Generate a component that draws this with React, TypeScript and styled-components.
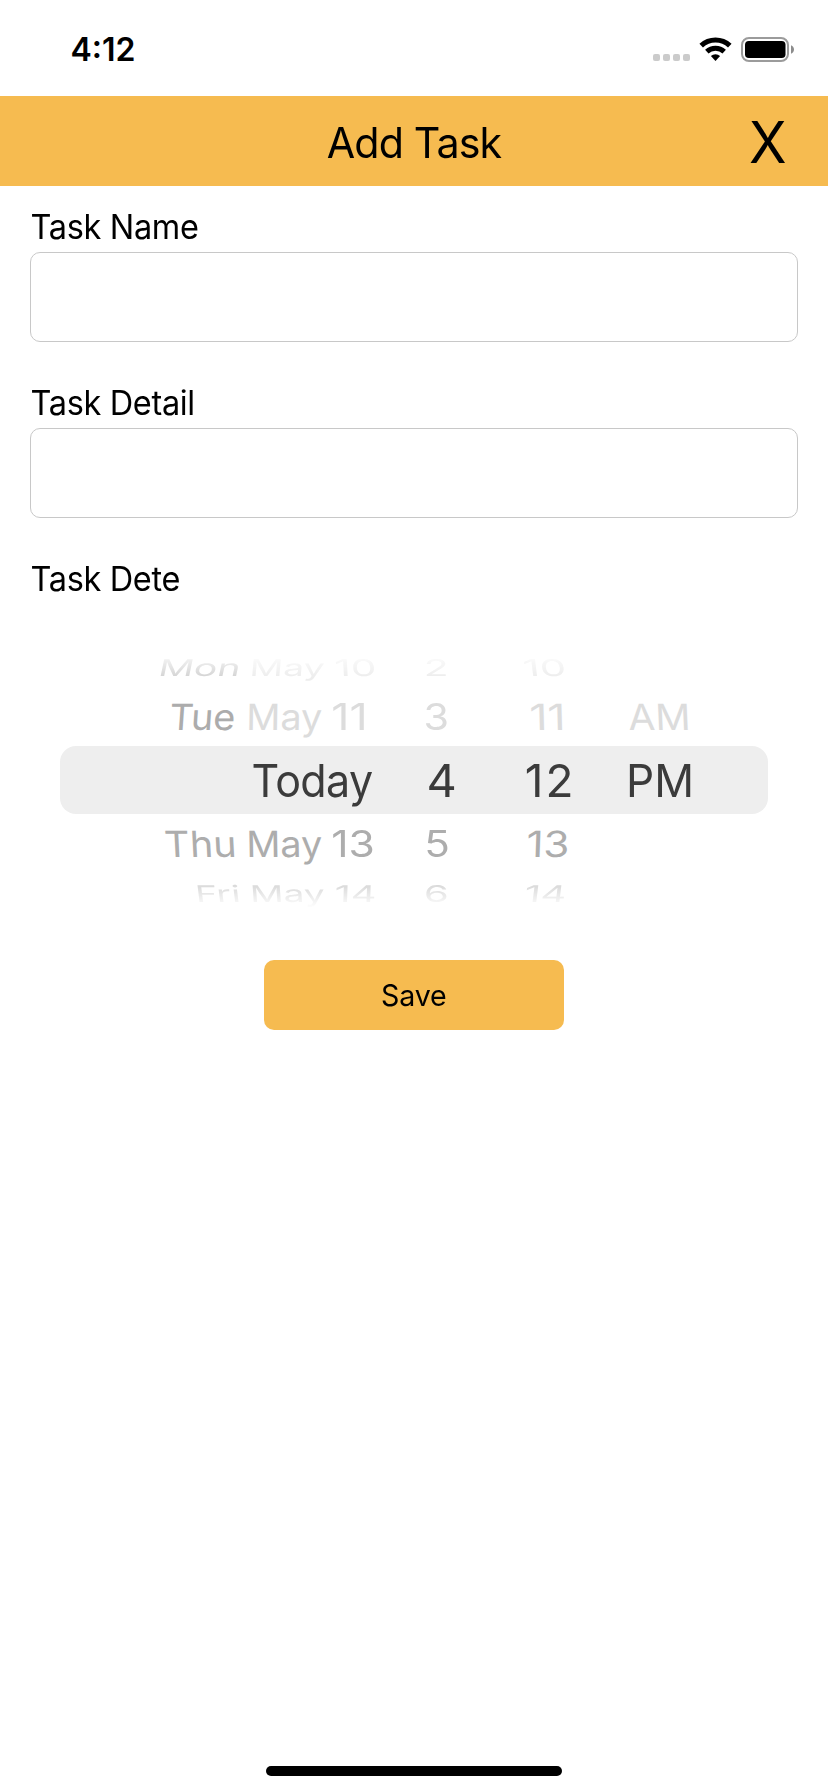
import React from "react";
import styled, { createGlobalStyle } from "styled-components";

const GlobalStyle = createGlobalStyle`
  * { box-sizing: border-box; }
  body {
    margin: 0;
    background: #fff;
    color: #000;
    font-family: Inter, "Liberation Sans", sans-serif;
  }
`;

const accent = "#f6bb50";

const Screen = styled.div`
  display: flex;
  flex-direction: column;
  width: 828px;
  height: 1792px;
  overflow: hidden;
  background: #fff;
`;

const StatusBar = styled.div`
  display: flex;
  justify-content: space-between;
  height: 96px;
  padding: 33px 34px 0 70.5px;
`;

const Clock = styled.time`
  font-size: 32px;
  font-weight: 600;
  line-height: 33px;
`;

const StatusIcons = styled.div`
  display: flex;
  align-items: flex-start;
  padding-top: 3px;
`;

const SignalDots = styled.div`
  display: flex;
  gap: 3px;
  margin: 18px 9px 0 0;
`;

const SignalDot = styled.span`
  width: 7px;
  height: 7px;
  border-radius: 2px;
  background: #cbcbcb;
`;

const WifiIcon = styled.svg`
  width: 33px;
  height: 26px;
  margin-right: 9px;
`;

const BatteryIcon = styled.svg`
  width: 53px;
  height: 27px;
`;

const Header = styled.header`
  display: grid;
  grid-template-columns: 1fr auto 1fr;
  align-items: center;
  height: 90px;
  flex: none;
  padding-right: 40px;
  padding-left: 40px;
  background: ${accent};
`;

const Title = styled.h1`
  grid-column: 2;
  margin: 0;
  padding-top: 2px;
  font-size: 42.5px;
  font-weight: 400;
  line-height: 90px;
  letter-spacing: -0.9px;
  transform: scaleX(0.97);
`;

const CloseButton = styled.button`
  justify-self: end;
  padding: 0;
  border: 0;
  background: none;
  color: inherit;
  font: 400 58px/88px Inter, sans-serif;
  transform: scaleX(0.95);
`;

const Form = styled.form`
  display: flex;
  flex-direction: column;
  padding: 16px 30px 0;
`;

const Field = styled.div`
  display: flex;
  flex-direction: column;
  margin-bottom: 36px;
`;

const Label = styled.label`
  padding-left: 0.5px;
  font-size: 33.5px;
  line-height: 50px;
  letter-spacing: -0.35px;
  transform: scaleX(0.97);
  transform-origin: left;
`;

const TextInput = styled.input`
  height: 90px;
  padding: 0 20px;
  border: 1px solid #c8c8c8;
  border-radius: 10px;
  background: #fff;
  font: 400 33px Inter, sans-serif;
  outline: none;
`;

const Picker = styled.div`
  display: flex;
  flex-direction: column;
  margin: 40px 30px 0;
`;

type Fade = "top" | "bottom" | "none";

const fades: Record<Fade, string> = {
  top: "linear-gradient(to bottom, rgba(0,0,0,.08) 11px, rgba(0,0,0,.5) 33px)",
  bottom: "linear-gradient(to bottom, rgba(0,0,0,.48) 13px, rgba(0,0,0,.04) 36px)",
  none: "none",
};

const PickerRow = styled.div<{ $height: number; $indent: number; $fade?: Fade }>`
  display: flex;
  align-items: center;
  height: ${(p) => p.$height}px;
  padding-left: ${(p) => p.$indent}px;
  mask-image: ${(p) => fades[p.$fade ?? "none"]};
`;

const SelectedRow = styled(PickerRow)`
  margin: 3px 0;
  padding-top: 2px;
  border-radius: 16px;
  background: #eee;
`;

const Slot = styled.span<{ $gap: number; $width: number }>`
  display: flex;
  flex: none;
  justify-content: center;
  width: ${(p) => p.$width}px;
  margin-left: ${(p) => p.$gap}px;
`;

const Word = styled.span<{
  $size: number;
  $color: string;
  $sx: number;
  $sy: number;
  $skew: number;
  $tracking: number;
}>`
  flex: none;
  color: ${(p) => p.$color};
  font-size: ${(p) => p.$size}px;
  line-height: 48px;
  letter-spacing: ${(p) => p.$tracking}px;
  margin-right: ${(p) => -p.$tracking}px;
  transform: skewX(${(p) => p.$skew}deg) scale(${(p) => p.$sx}, ${(p) => p.$sy});
`;

const SaveButton = styled.button`
  align-self: center;
  width: 300px;
  height: 70px;
  margin-top: 44px;
  padding: 0 1px 0 0;
  border: 0;
  border-radius: 10px;
  background: ${accent};
  color: #000;
  font: 400 29.5px/70px Inter, sans-serif;
`;

const SaveText = styled.span`
  display: inline-block;
  letter-spacing: -0.2px;
  transform: scaleX(0.97);
`;

const HomeIndicator = styled.div`
  align-self: center;
  width: 296px;
  height: 10px;
  margin: auto 0 16px;
  border-radius: 5px;
  background: #000;
`;

/* text, gap before, drawn width, horizontal scale, skew, colour */
type Cell = [string, number, number, number, number, string?];

type WheelRow = {
  height: number;
  indent: number;
  fade?: Fade;
  squash: number;
  color: string;
  cells: Cell[];
};

const above: WheelRow[] = [
  {
    height: 46, indent: 102, fade: "top", squash: 0.535, color: "#dcdcdc",
    cells: [
      ["Mon", 0, 77, 0.91, -12, "#a9a9a9"],
      ["May", 12, 72.5, 0.865, -5],
      ["10", 13, 38.5, 0.94, 3],
      ["2", 51.5, 20, 0.95, 0],
      ["10", 78.5, 39.5, 0.97, 7],
    ],
  },
  {
    height: 53, indent: 111, squash: 0.84, color: "#dcdcdc",
    cells: [
      ["Tue", 0, 63.5, 0.88, -4, "#acacac"],
      ["May", 12.5, 74, 0.88, -1],
      ["11", 12.5, 31.5, 1.04, 0],
      ["3", 60.5, 21, 0.96, 0],
      ["11", 85.5, 31.5, 1.04, 1.5],
      ["AM", 66, 59, 0.91, 2.5],
    ],
  },
];

const below: WheelRow[] = [
  {
    height: 53, indent: 105.5, squash: 0.84, color: "#adadad",
    cells: [
      ["Thu", 0, 69, 0.92, 3],
      ["May", 12.5, 74, 0.88, 1],
      ["13", 12.5, 40, 0.99, 0],
      ["5", 53, 20.5, 0.98, 0],
      ["13", 81.5, 39, 0.98, -2],
    ],
  },
  {
    height: 46, indent: 137, fade: "bottom", squash: 0.535, color: "#a9a9a9",
    cells: [
      ["Fri", 0, 40.5, 0.88, 7],
      ["May", 13.5, 72.5, 0.865, 4],
      ["14", 12.5, 39, 0.93, -2],
      ["6", 50.5, 21, 0.93, 0],
      ["14", 79.5, 38.5, 0.93, -7],
    ],
  },
];

function WheelLine({ row }: { row: WheelRow }) {
  return (
    <PickerRow $height={row.height} $indent={row.indent} $fade={row.fade}>
      {row.cells.map(([text, gap, width, sx, skew, color], i) => (
        <Slot key={i} $gap={gap} $width={width}>
          <Word $size={43} $color={color ?? row.color} $sx={sx} $sy={row.squash} $skew={skew} $tracking={0}>
            {text}
          </Word>
        </Slot>
      ))}
    </PickerRow>
  );
}

/* text, gap before, drawn width, horizontal scale, letter spacing */
const selected: [string, number, number, number, number][] = [
  ["Today", 0, 120, 0.945, -0.7],
  ["4", 56.5, 26, 1.03, 0],
  ["12", 72.5, 44, 1.01, 2],
  ["PM", 58, 62.5, 0.97, 0],
];

export default function App() {
  return (
    <>
      <GlobalStyle />
      <Screen>
        <StatusBar>
          <Clock>4:12</Clock>
          <StatusIcons>
            <SignalDots>
              <SignalDot />
              <SignalDot />
              <SignalDot />
              <SignalDot />
            </SignalDots>
            <WifiIcon viewBox="0 0 33 26" fill="none" stroke="#000">
              <path d="M2.2 9.6A21 21 0 0 1 30.8 9.6" strokeWidth="5.2" />
              <path d="M7.8 15.6A12.8 12.8 0 0 1 25.2 15.6" strokeWidth="5" />
              <path d="M16.5 25L11.9 20.1A6.7 6.7 0 0 1 21.1 20.1Z" fill="#000" stroke="none" />
            </WifiIcon>
            <BatteryIcon viewBox="0 0 53 27">
              <rect x="1" y="2" width="46" height="23" rx="7" fill="none" stroke="#9b9b9b" strokeWidth="2" />
              <rect x="4" y="5" width="40.5" height="17" rx="3.8" fill="#000" />
              <path d="M50 9.2C52 10 53 11.8 53 13.5S52 17 50 17.8Z" fill="#8c8c8c" />
            </BatteryIcon>
          </StatusIcons>
        </StatusBar>

        <Header>
          <Title>Add Task</Title>
          <CloseButton type="button">X</CloseButton>
        </Header>

        <Form>
          <Field>
            <Label htmlFor="name">Task Name</Label>
            <TextInput id="name" />
          </Field>
          <Field>
            <Label htmlFor="detail">Task Detail</Label>
            <TextInput id="detail" />
          </Field>
          <Label as="div">Task Dete</Label>

          <Picker>
            {above.map((row, i) => (
              <WheelLine key={i} row={row} />
            ))}
            <SelectedRow $height={68} $indent={192}>
              {selected.map(([text, gap, width, sx, tracking]) => (
                <Slot key={text} $gap={gap} $width={width}>
                  <Word $size={45.5} $color="#3b3b3b" $sx={sx} $sy={1} $skew={0} $tracking={tracking}>
                    {text}
                  </Word>
                </Slot>
              ))}
            </SelectedRow>
            {below.map((row, i) => (
              <WheelLine key={i} row={row} />
            ))}
          </Picker>

          <SaveButton type="button">
            <SaveText>Save</SaveText>
          </SaveButton>
        </Form>

        <HomeIndicator />
      </Screen>
    </>
  );
}
